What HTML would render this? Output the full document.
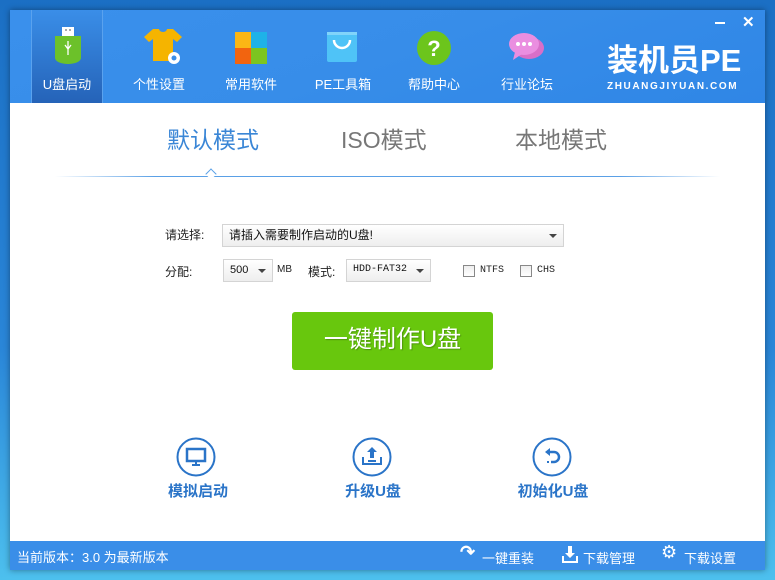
<!DOCTYPE html>
<html><head><meta charset="utf-8"><style>
*{margin:0;padding:0;box-sizing:border-box}
body{width:775px;height:580px;overflow:hidden;background:linear-gradient(180deg,#1b6fc4 0%,#2a86d8 60%,#4dc0ee 100%);font-family:"Liberation Sans","Noto Sans CJK SC",sans-serif;position:relative}
.win{position:absolute;left:10px;top:10px;width:755px;height:560px;background:#fff;box-shadow:0 0 6px rgba(0,0,0,.4)}
.hd{position:absolute;left:0;top:0;width:755px;height:93px;background:linear-gradient(160deg,#3a90ec 0%,#378de9 50%,#2f86e6 100%)}
.nav{position:absolute;top:0;width:72px;height:93px;color:#fff;font-size:13px;text-align:center}
.nav span{position:absolute;left:0;right:0;top:64px}
.nav svg{position:absolute;left:20px;top:17px}
.sel{background:linear-gradient(180deg,#3a8ee8 0%,#2563b8 100%);border-left:1px solid #5aa2ee;border-right:1px solid #5aa2ee}
.abs{position:absolute}
.ft{position:absolute;left:0;top:531px;width:755px;height:29px;background:#3a8ee8;color:#fff;font-size:13px}
.box{position:absolute;border:1px solid #d4d4d4;background:linear-gradient(#fff,#eee);font-size:12px;color:#111;padding-left:6px;line-height:20px}
.arr{position:absolute;right:6px;top:9px;border-left:4px solid transparent;border-right:4px solid transparent;border-top:4px solid #444}
.lbl{position:absolute;font-size:12px;color:#222}
.cb{position:absolute;width:12px;height:12px;border:1px solid #888;background:linear-gradient(#eee,#fff)}
.bi{position:absolute;font-size:15px;font-weight:bold;color:#2a74c8;text-align:center;width:120px}
</style></head><body>
<div class="win">
<div class="hd">
<div class="nav sel" style="left:21px"><svg width="32" height="40" viewBox="0 0 32 40"><rect x="10" y="0" width="12" height="9" fill="#fff"/><rect x="13" y="2" width="2" height="2" fill="#aaa"/><rect x="17" y="2" width="2" height="2" fill="#aaa"/><path d="M3 9h26v22a13 6 0 0 1-26 0z" fill="#6cc12a"/><path d="M16 14v14M13 18l3 4 3-4" stroke="#fff" stroke-width="1.3" fill="none"/></svg><span>U盘启动</span></div>
<div class="nav" style="left:113px"><svg width="40" height="40" viewBox="0 0 40 40"><path d="M10 2l6 0a4 3 0 0 0 8 0h6l9 8-5 5-4-3v22H10V12l-4 3-5-5z" fill="#f5b400"/><circle cx="31" cy="31" r="6" fill="#fff"/><circle cx="31" cy="31" r="2.5" fill="#3a8ee8"/></svg><span>个性设置</span></div>
<div class="nav" style="left:205px"><svg width="32" height="32" viewBox="0 0 32 32" style="left:20px;top:22px"><rect x="0" y="0" width="16" height="16" fill="#fbb615"/><rect x="16" y="0" width="16" height="16" fill="#1eb2e8"/><rect x="0" y="16" width="16" height="16" fill="#f2640f"/><rect x="16" y="16" width="16" height="16" fill="#7cc520"/></svg><span>常用软件</span></div>
<div class="nav" style="left:297px"><svg width="32" height="32" viewBox="0 0 32 32" style="left:20px;top:22px"><rect x="0" y="0" width="30" height="30" rx="2" fill="#4fc3f7"/><rect x="0" y="0" width="30" height="3" fill="#81d4fa"/><path d="M7 8a8 8 0 0 0 16 0" stroke="#fff" stroke-width="2.5" fill="none"/></svg><span>PE工具箱</span></div>
<div class="nav" style="left:388px"><svg width="34" height="34" viewBox="0 0 34 34" style="left:19px;top:21px"><circle cx="17" cy="17" r="17" fill="#6cc51c"/><text x="17" y="25" font-size="22" font-weight="bold" fill="#fff" text-anchor="middle" font-family="Liberation Sans">?</text></svg><span>帮助中心</span></div>
<div class="nav" style="left:481px"><svg width="40" height="34" viewBox="0 0 40 34" style="left:16px;top:21px"><ellipse cx="22" cy="17" rx="15" ry="11" fill="#d86fc8"/><ellipse cx="17" cy="13" rx="15" ry="11" fill="#ea8ee0"/><path d="M8 21l-2 8 9-6z" fill="#ea8ee0"/><circle cx="11" cy="13" r="2" fill="#fff"/><circle cx="17" cy="13" r="2" fill="#fff"/><circle cx="23" cy="13" r="2" fill="#fff"/></svg><span>行业论坛</span></div>
<div class="abs" style="left:597px;top:33px;color:#fff;font-size:31px;font-weight:bold;line-height:36px;white-space:nowrap">装机员PE</div>
<div class="abs" style="left:597px;top:71px;color:#fff;font-size:10px;font-weight:bold;letter-spacing:1.6px;white-space:nowrap">ZHUANGJIYUAN.COM</div>
<div class="abs" style="left:705px;top:12px;width:10px;height:2px;background:#fff"></div>
<div class="abs" style="left:732px;top:3px;color:#fff;font-size:15px;font-weight:bold">✕</div>
</div>
<div class="abs" style="left:157px;top:111px;font-size:23px;color:#3a86d6">默认模式</div>
<div class="abs" style="left:331px;top:111px;font-size:23px;color:#777">ISO模式</div>
<div class="abs" style="left:505px;top:111px;font-size:23px;color:#777">本地模式</div>
<div class="abs" style="left:45px;top:166px;width:665px;height:1px;background:linear-gradient(90deg,rgba(90,160,230,0),#5aa0e6 15%,#5aa0e6 85%,rgba(90,160,230,0))"></div>
<div class="abs" style="left:197px;top:160px;width:8px;height:8px;border-left:1px solid #5aa0e6;border-top:1px solid #5aa0e6;background:#fff;transform:rotate(45deg)"></div>
<div class="lbl" style="left:155px;top:216px">请选择:</div>
<div class="box" style="left:212px;top:214px;width:342px;height:23px">请插入需要制作启动的U盘!<i class="arr"></i></div>
<div class="lbl" style="left:155px;top:253px">分配:</div>
<div class="box" style="left:213px;top:249px;width:50px;height:23px;font-size:11px">500<i class="arr"></i></div>
<div class="lbl" style="left:267px;top:254px;font-size:10px">MB</div>
<div class="lbl" style="left:298px;top:253px">模式:</div>
<div class="box" style="left:336px;top:249px;width:85px;height:23px;font-size:10px;font-family:'Liberation Mono',monospace">HDD-FAT32<i class="arr"></i></div>
<div class="cb" style="left:453px;top:255px"></div><div class="lbl" style="left:470px;top:255px;font-size:10px;font-family:'Liberation Mono',monospace">NTFS</div>
<div class="cb" style="left:510px;top:255px"></div><div class="lbl" style="left:527px;top:255px;font-size:10px;font-family:'Liberation Mono',monospace">CHS</div>
<div class="abs" style="left:282px;top:302px;width:201px;height:58px;background:#68c70d;border-radius:3px;color:#fff;font-size:24px;text-align:center;line-height:56px;text-shadow:1px 1px 1px rgba(0,0,0,.25)">一键制作U盘</div>
<svg class="abs" style="left:166px;top:427px" width="40" height="40" viewBox="0 0 40 40"><circle cx="20" cy="20" r="18.5" stroke="#2a74c8" stroke-width="2" fill="none"/><rect x="11" y="12" width="18" height="12" stroke="#2a74c8" stroke-width="2.5" fill="none"/><path d="M16 28h8M20 24v4" stroke="#2a74c8" stroke-width="2"/></svg>
<svg class="abs" style="left:342px;top:427px" width="40" height="40" viewBox="0 0 40 40"><circle cx="20" cy="20" r="18.5" stroke="#2a74c8" stroke-width="2" fill="none"/><path d="M20 10l-5 5h3v6h4v-6h3z" fill="#2a74c8"/><path d="M11 20v7h18v-7" stroke="#2a74c8" stroke-width="2" fill="none"/><rect x="16" y="23" width="8" height="2" fill="#2a74c8"/></svg>
<svg class="abs" style="left:522px;top:427px" width="40" height="40" viewBox="0 0 40 40"><circle cx="20" cy="20" r="18.5" stroke="#2a74c8" stroke-width="2" fill="none"/><path d="M16 15h6a5 5 0 0 1 0 10h-3" stroke="#2a74c8" stroke-width="2.5" fill="none"/><path d="M13 15l5-4v8z" fill="#2a74c8"/><rect x="15" y="24" width="2" height="2" fill="#2a74c8"/></svg>
<div class="bi" style="left:128px;top:470px">模拟启动</div>
<div class="bi" style="left:303px;top:470px">升级U盘</div>
<div class="bi" style="left:483px;top:470px">初始化U盘</div>
<div class="ft">
<div class="abs" style="left:7px;top:6px">当前版本：3.0 为最新版本</div>
<div class="abs" style="left:450px;top:1px;font-size:18px;font-weight:bold">↷</div>
<div class="abs" style="left:472px;top:7px">一键重装</div>
<svg class="abs" style="left:552px;top:5px" width="16" height="17" viewBox="0 0 16 17"><path d="M6 0h4v7h3l-5 5-5-5h3z" fill="#fff"/><path d="M1 10v6h14v-6" stroke="#fff" stroke-width="2" fill="none"/></svg>
<div class="abs" style="left:573px;top:7px">下载管理</div>
<div class="abs" style="left:651px;top:1px;font-size:18px">⚙</div>
<div class="abs" style="left:674px;top:7px">下载设置</div>
</div>
</div>
</body></html>
